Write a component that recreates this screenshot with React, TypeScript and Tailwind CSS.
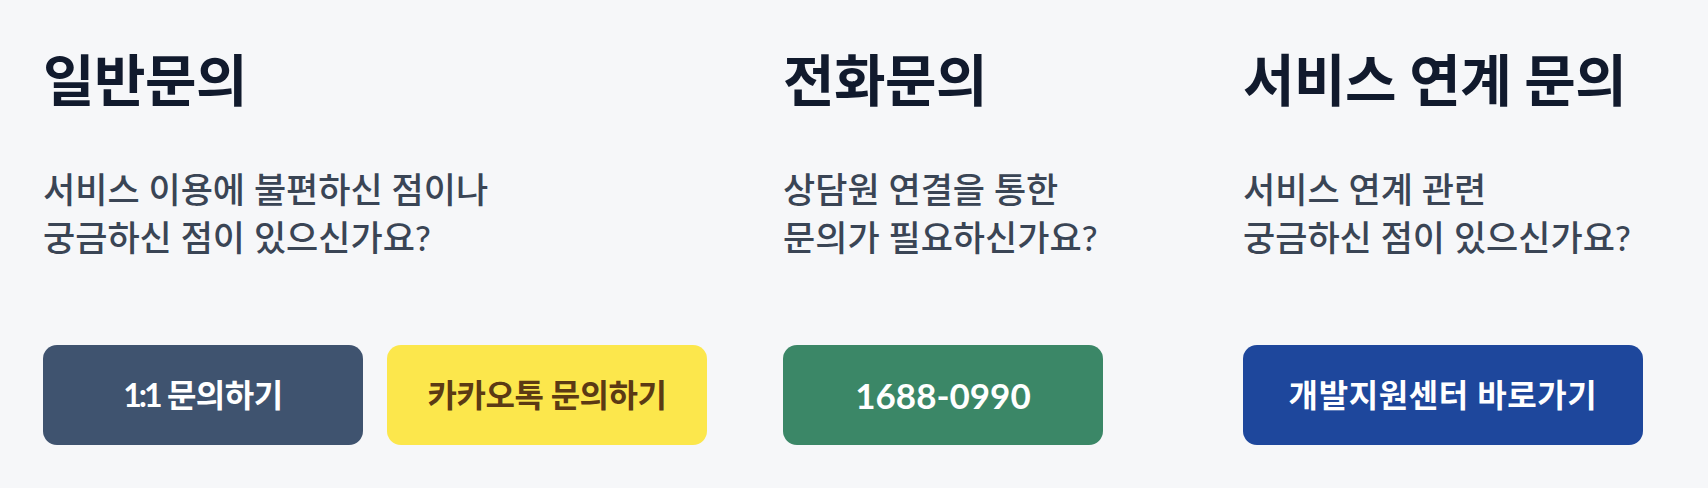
import React from "react";

const font = "font-['Lato','Noto_Sans_CJK_KR',sans-serif]";

function Section({
  title,
  lines,
  children,
}: {
  title: string;
  lines: string[];
  children: React.ReactNode;
}) {
  return (
    <div className="flex flex-col">
      <h2 className="text-[56px] leading-[60px] font-bold text-[#111a2d] tracking-[-0.5px]">{title}</h2>
      <p className="mt-[55px] text-[35px] leading-[48px] font-medium text-[#3a4555]">
        {lines[0]}
        <br />
        {lines[1]}
      </p>
      <div className="mt-[84px] flex gap-6">{children}</div>
    </div>
  );
}

function Btn({ className, children }: { className: string; children: React.ReactNode }) {
  return (
    <button
      className={`h-[100px] rounded-[14px] flex items-center justify-center font-bold ${className}`}
    >
      {children}
    </button>
  );
}

export default function App() {
  return (
    <div className={`${font} w-[1708px] h-[488px] bg-[#f6f7f9] pt-[50px] pl-[43px]`}>
      <div className="grid grid-cols-[740px_460px_400px]">
        <Section title="일반문의" lines={["서비스 이용에 불편하신 점이나", "궁금하신 점이 있으신가요?"]}>
          <Btn className="w-[320px] bg-[#3f536f] text-white text-[32px] tracking-[-0.5px]">
            <span>
              <span className="tracking-[-3px]">1:1</span> 문의하기
            </span>
          </Btn>
          <Btn className="w-[320px] bg-[#fce74c] text-[#5b3a14] text-[32px] tracking-[-0.5px]">카카오톡 문의하기</Btn>
        </Section>
        <Section title="전화문의" lines={["상담원 연결을 통한", "문의가 필요하신가요?"]}>
          <Btn className="w-[320px] bg-[#3b8767] text-white text-[35px]">1688-0990</Btn>
        </Section>
        <Section title="서비스 연계 문의" lines={["서비스 연계 관련", "궁금하신 점이 있으신가요?"]}>
          <Btn className="w-[400px] bg-[#1e479c] text-white text-[32px] tracking-[0.6px]">개발지원센터 바로가기</Btn>
        </Section>
      </div>
    </div>
  );
}
